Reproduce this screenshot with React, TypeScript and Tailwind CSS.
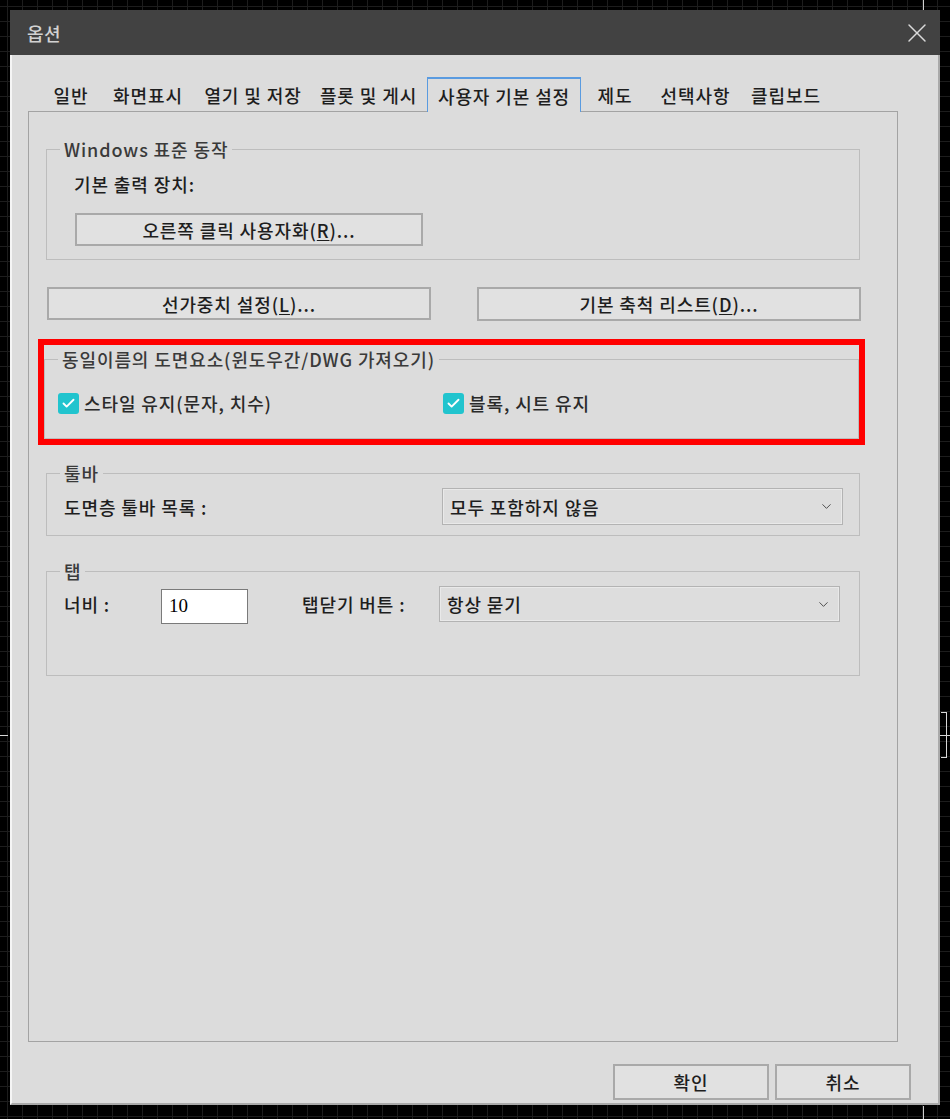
import { X, ChevronDown, Check } from 'lucide-react';
import type { ReactNode } from 'react';

const tabs = [
  { label: '일반', w: 'w-[58px]' },
  { label: '화면표시', w: 'w-[96px]' },
  { label: '열기 및 저장', w: 'w-[114px]' },
  { label: '플롯 및 게시', w: 'w-[117px]' },
  { label: '사용자 기본 설정', w: 'w-[154px]', active: true },
  { label: '제도', w: 'w-[68px]' },
  { label: '선택사항', w: 'w-[93px]' },
  { label: '클립보드', w: 'w-[88px]' },
];

function Group({ title, className, children }: { title: string; className?: string; children: ReactNode }) {
  return (
    <fieldset className={`border border-[#bdbdbd] ${className ?? ''}`}>
      <legend className="ml-[13px] px-[4px] text-[18px] leading-[24px] tracking-[0.9px] text-[#3a3a3a]">{title}</legend>
      {children}
    </fieldset>
  );
}

function Btn({ children, className }: { children: ReactNode; className?: string }) {
  return (
    <button className={`flex items-center justify-center border-2 border-[#a9a9a9] bg-[#e1e1e1] text-[18px] leading-none tracking-[0.9px] text-[#1e1e1e] ${className ?? ''}`}>
      {children}
    </button>
  );
}

function Checkbox({ label, className }: { label: string; className?: string }) {
  return (
    <label className={`flex items-center gap-[5px] ${className ?? ''}`}>
      <span className="flex h-[21px] w-[21px] items-center justify-center rounded-[3px] bg-[#21c4ce]">
        <Check size={15} strokeWidth={3} className="text-white" />
      </span>
      <span className="text-[18px] leading-[24px] tracking-[0.9px] text-[#2a2a2a]">{label}</span>
    </label>
  );
}

function Select({ value, className }: { value: string; className?: string }) {
  return (
    <div className={`flex items-center justify-between border border-[#b3b3b3] bg-[#dddddd] pl-[7px] pr-[8px] shadow-[inset_0_0_0_1px_#e9e9e9] ${className ?? ''}`}>
      <span className="text-[18px] leading-none tracking-[0.9px] text-[#1e1e1e]">{value}</span>
      <ChevronDown size={15} strokeWidth={1.5} className="text-[#444]" />
    </div>
  );
}

export default function App() {
  return (
    <div className="relative h-[1119px] w-[950px] overflow-hidden bg-black bg-[linear-gradient(#1d1d1d_1px,transparent_1px),linear-gradient(90deg,#1d1d1d_1px,transparent_1px)] bg-[size:15px_15px] bg-[position:7px_6px] pl-[10px] pt-[10px] font-['Noto_Sans_CJK_KR','Noto_Sans',sans-serif] font-medium">
      {/* crosshair bits on the drawing canvas */}
      <div className="absolute left-[923px] top-0 h-[10px] w-px bg-[#cfcfcf]" />
      <div className="absolute left-[923px] top-[1106px] h-[13px] w-px bg-[#cfcfcf]" />
      <div className="absolute left-0 top-[735px] h-px w-[8px] bg-[#d8d8d8]" />
      <div className="absolute left-[941px] top-[712px] h-[46px] w-[6px] border-y border-r border-[#d8d8d8]" />
      <div className="absolute left-[940px] top-[735px] h-px w-[10px] bg-[#d8d8d8]" />

      <div className="flex h-[1095px] w-[930px] flex-col">
        <div className="flex h-[45px] items-center justify-between bg-[#424242] pl-[17px] pr-[7px]">
          <span className="text-[18px] leading-none tracking-[0.5px] text-[#d2d2d2]">옵션</span>
          <X size={32} strokeWidth={1.1} className="text-[#dadada]" />
        </div>

        <div className="flex flex-1 flex-col border-b-2 border-l-2 border-r-2 border-b-[#a9a9a9] border-l-[#f5f5f5] border-r-[#a9a9a9] bg-[#dcdcdc] pl-[16px] pt-[22px]">
          <div className="relative z-10 -mb-px flex h-[35px] pl-[14px]">
            {tabs.map(t => (
              <div
                key={t.label}
                className={`flex h-full items-center justify-center text-[18px] leading-none tracking-[0.9px] text-[#1e1e1e] ${t.w} ${t.active ? 'border-x border-t-2 border-[#5a9be0] bg-[#dcdcdc]' : ''}`}
              >
                {t.label}
              </div>
            ))}
          </div>

          <div className="h-[931px] w-[870px] border border-[#a3a3a3] pl-[17px] pt-[25px]">
            <Group title="Windows 표준 동작" className="w-[814px] pb-[13px]">
              <div className="mt-[11px] pl-[27px] text-[18px] leading-[24px] tracking-[0.9px] text-[#1e1e1e]">기본 출력 장치:</div>
              <Btn className="ml-[28px] mt-[17px] h-[33px] w-[348px]">
                오른쪽 클릭 사용자화(<span className="underline underline-offset-2">R</span>)...
              </Btn>
            </Group>

            <div className="mt-[27px] flex gap-[46px] pl-px">
              <Btn className="h-[33px] w-[384px]">
                선가중치 설정(<span className="underline underline-offset-2">L</span>)...
              </Btn>
              <Btn className="h-[34px] w-[384px]">
                기본 축척 리스트(<span className="underline underline-offset-2">D</span>)...
              </Btn>
            </div>

            <div className="-ml-[8px] mt-[18px] h-[106px] w-[827px] border-[6px] border-[#ff0000]">
              <Group title="동일이름의 도면요소(윈도우간/DWG 가져오기)" className="mt-[2px] h-[92px] w-[815px]">
                <div className="mt-[20px] flex pl-[13px]">
                  <Checkbox label="스타일 유지(문자, 치수)" className="w-[385px]" />
                  <Checkbox label="블록, 시트 유지" />
                </div>
              </Group>
            </div>

            <Group title="툴바" className="mt-[16px] w-[814px] pb-[10px]">
              <div className="mt-[3px] flex items-center pl-[17px]">
                <span className="w-[378px] text-[18px] leading-none tracking-[0.9px] text-[#1e1e1e]">도면층 툴바 목록 :</span>
                <Select value="모두 포함하지 않음" className="h-[37px] w-[401px]" />
              </div>
            </Group>

            <Group title="탭" className="mt-[23px] w-[814px] pb-[51px]">
              <div className="mt-[3px] flex items-start pl-[17px]">
                <span className="flex h-[36px] w-[97px] items-center text-[18px] leading-none tracking-[0.9px] text-[#1e1e1e]">너비 :</span>
                <div className="mt-[3px] flex h-[35px] w-[87px] items-center border border-[#7a7a7a] bg-white pl-[7px] font-['Liberation_Serif',serif] text-[19px] font-normal text-black">
                  10
                </div>
                <span className="ml-[54px] flex h-[36px] w-[137px] items-center text-[18px] leading-none tracking-[0.9px] text-[#1e1e1e]">탭닫기 버튼 :</span>
                <Select value="항상 묻기" className="h-[36px] w-[401px]" />
              </div>
            </Group>
          </div>

          <div className="mt-[22px] flex justify-end gap-[6px] pr-[27px]">
            <Btn className="h-[36px] w-[156px]">확인</Btn>
            <Btn className="h-[36px] w-[136px]">취소</Btn>
          </div>
        </div>
      </div>
    </div>
  );
}
